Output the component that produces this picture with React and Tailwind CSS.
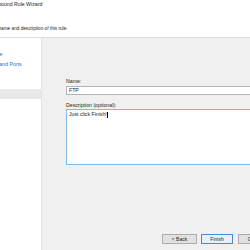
export default function App() {
  const steps = ['Rule Type', 'Protocol and Ports', 'Action', 'Profile', 'Name'];

  return (
    <div className="w-[250px] h-[250px] overflow-hidden bg-[#f0f0f0] flex flex-col text-[#1e1e1e]" style={{ fontFamily: '"Liberation Sans", Arial, sans-serif' }}>
      <div className="h-[38px] shrink-0 bg-white border-b border-[#dcdcdc] overflow-hidden whitespace-nowrap">
        <div className="-ml-[18px] pt-[1px] text-[5.2px] leading-[7px]">New Inbound Rule Wizard</div>
        <div className="-ml-[26px] mt-[17px] text-[4.7px] leading-[7px]">Specify the name and description of this rule.</div>
      </div>

      <div className="flex flex-1 min-h-0">
        <div className="w-[42px] shrink-0 bg-white border-r border-[#e5e5e5] pt-[12px] overflow-hidden whitespace-nowrap">
          {steps.map((s) => (
            <div key={s} className={`h-[9.8px] leading-[9.8px] text-[5.2px] -ml-[21px] pl-[0px] ${s === 'Name' ? 'bg-[#e8e8e8] text-[#1e1e1e] ml-0' : 'text-[#2a6fd4]'}`}>
              <span className={s === 'Name' ? '-ml-[21px]' : ''}>{s}</span>
            </div>
          ))}
        </div>

        <div className="flex-1 flex flex-col pl-[24px] pt-[40px] overflow-hidden">
          <div className="text-[5.2px] leading-[7px]">Name:</div>
          <div className="mt-[1px] w-[200px] h-[9px] shrink-0 bg-white border border-[#b4b4b4] pl-[2px] text-[5.2px] leading-[7px]">FTP</div>
          <div className="mt-[7px] text-[5.2px] leading-[7px]">Description (optional):</div>
          <div className="mt-[0px] w-[200px] h-[56px] shrink-0 bg-white border border-[#83b9ea] pl-[2px] pt-[1px] text-[5.2px] leading-[7px] flex items-start">
            <span>Just click Finish!</span>
            <span className="w-px h-[6px] mt-[0.5px] bg-black" />
          </div>

          <div className="mt-[69px] ml-[96px] flex gap-[4px] whitespace-nowrap">
            <div className="w-[35px] h-[10px] shrink-0 bg-[#e1e1e1] border border-[#adadad] text-[5px] leading-[8px] text-center">&lt; Back</div>
            <div className="w-[32px] h-[10px] shrink-0 bg-[#e5f1fb] border border-[#3c8fdd] text-[5px] leading-[8px] text-center">Finish</div>
            <div className="ml-[1px] w-[35px] h-[10px] shrink-0 bg-[#e1e1e1] border border-[#adadad] text-[5px] leading-[8px] text-center">Cancel</div>
          </div>
        </div>
      </div>
    </div>
  );
}
